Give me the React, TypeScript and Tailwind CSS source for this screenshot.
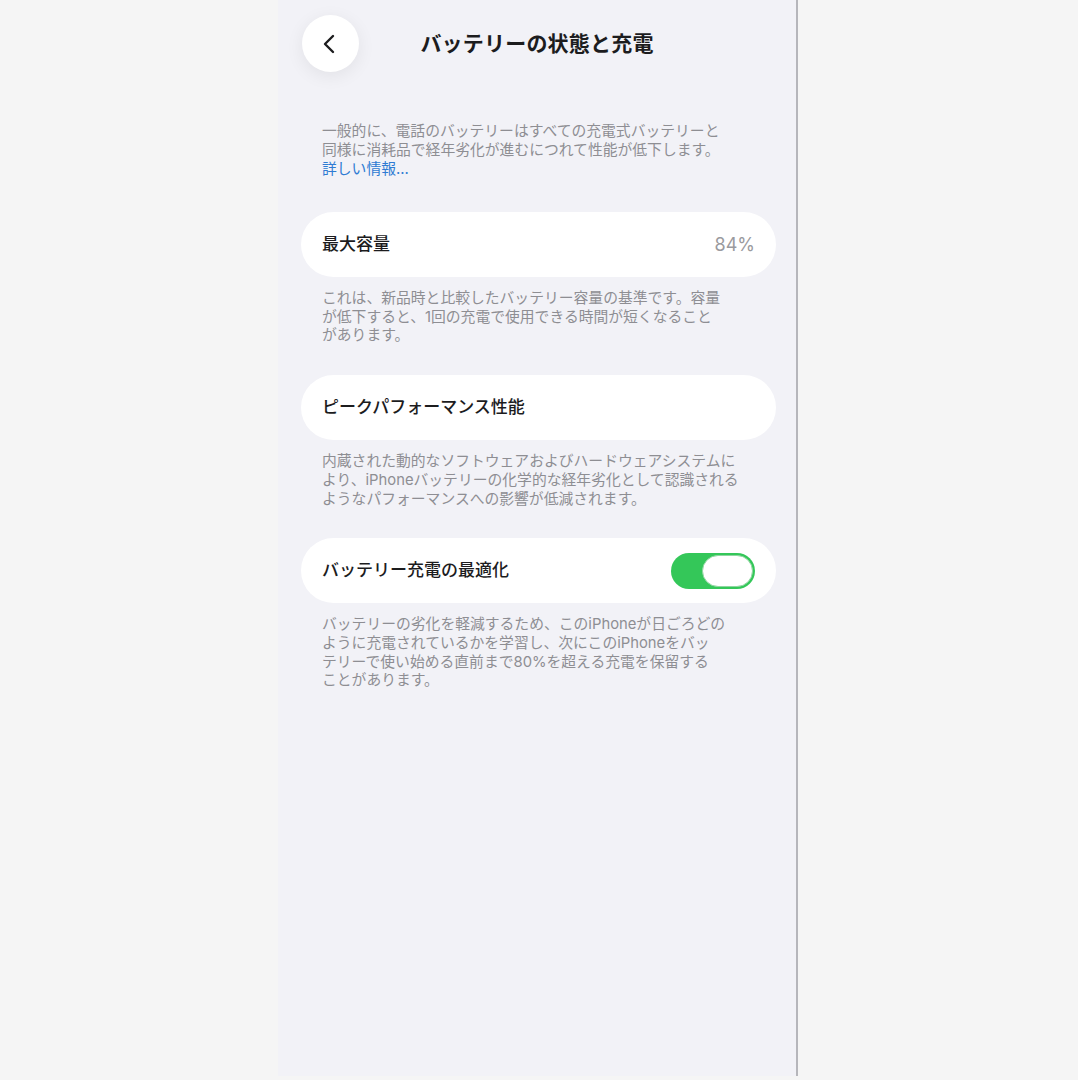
import React from 'react';

const jp = { fontFamily: 'Inter, "Noto Sans CJK JP", "Noto Sans", sans-serif' };

function Toggle() {
  return (
    <div className="w-[84px] h-[36px] rounded-full bg-[#34c759] p-[2px] flex justify-end">
      <div className="w-[51px] h-[32px] rounded-full bg-white border border-[#8fd6a0]" />
    </div>
  );
}

function Card({ label, right }: { label: string; right?: React.ReactNode }) {
  return (
    <div className="ml-[23px] mr-[20px] h-[65px] rounded-full bg-white flex items-center justify-between pl-[21px] pr-[21px]">
      <span className="text-[17px] font-medium text-[#1c1c1e]">{label}</span>
      {right}
    </div>
  );
}

function Note({ lines, className = '' }: { lines: string[]; className?: string }) {
  return (
    <p className={`ml-[44px] text-[14.8px] leading-[18.7px] text-[#8e8e93] ${className}`}>
      {lines.map((l, i) => (
        <span key={i} className="block whitespace-nowrap">
          {l}
        </span>
      ))}
    </p>
  );
}

export default function App() {
  return (
    <div className="w-[1078px] h-[1080px] bg-[#f5f5f5] overflow-hidden" style={jp}>
      <div className="ml-[278px] w-[520px] h-[1076px] bg-[#f2f2f7] border-r-2 border-[#b6b6bb]">
        {/* ヘッダー */}
        <div className="grid grid-cols-[56px_1fr_56px] items-center pl-[24px] pr-[24px] pt-[15px]">
          <div className="w-[57px] h-[57px] rounded-full bg-white shadow-[0_4px_18px_rgba(0,0,0,0.07)] flex items-center justify-center pr-[3px]">
            <svg width="14" height="22" viewBox="0 0 14 22" fill="none">
              <path d="M11 3 L3 11 L11 19" stroke="#1c1c1e" strokeWidth="2.4" strokeLinecap="round" strokeLinejoin="round" />
            </svg>
          </div>
          <h1 className="text-center text-[21px] font-bold text-[#1c1c1e] tracking-[0.2px]">
            バッテリーの状態と充電
          </h1>
          <div />
        </div>

        {/* 説明 */}
        <div className="ml-[44px] mt-[50px] text-[14.8px] leading-[19px] text-[#8e8e93]">
          <span className="block whitespace-nowrap">一般的に、電話のバッテリーはすべての充電式バッテリーと</span>
          <span className="block whitespace-nowrap">同様に消耗品で経年劣化が進むにつれて性能が低下します。</span>
          <span className="block text-[#2f7bd3]">詳しい情報...</span>
        </div>

        {/* 最大容量 */}
        <div className="mt-[33px]">
          <Card label="最大容量" right={<span className="text-[18px] text-[#9a9a9e]">84%</span>} />
          <Note
            className="mt-[12px]"
            lines={[
              'これは、新品時と比較したバッテリー容量の基準です。容量',
              'が低下すると、1回の充電で使用できる時間が短くなること',
              'があります。',
            ]}
          />
        </div>

        {/* ピークパフォーマンス */}
        <div className="mt-[30px]">
          <Card label="ピークパフォーマンス性能" />
          <Note
            className="mt-[12px]"
            lines={[
              '内蔵された動的なソフトウェアおよびハードウェアシステムに',
              'より、iPhoneバッテリーの化学的な経年劣化として認識される',
              'ようなパフォーマンスへの影響が低減されます。',
            ]}
          />
        </div>

        {/* 充電の最適化 */}
        <div className="mt-[30px]">
          <Card label="バッテリー充電の最適化" right={<Toggle />} />
          <Note
            className="mt-[12px]"
            lines={[
              'バッテリーの劣化を軽減するため、このiPhoneが日ごろどの',
              'ように充電されているかを学習し、次にこのiPhoneをバッ',
              'テリーで使い始める直前まで80%を超える充電を保留する',
              'ことがあります。',
            ]}
          />
        </div>
      </div>
    </div>
  );
}
